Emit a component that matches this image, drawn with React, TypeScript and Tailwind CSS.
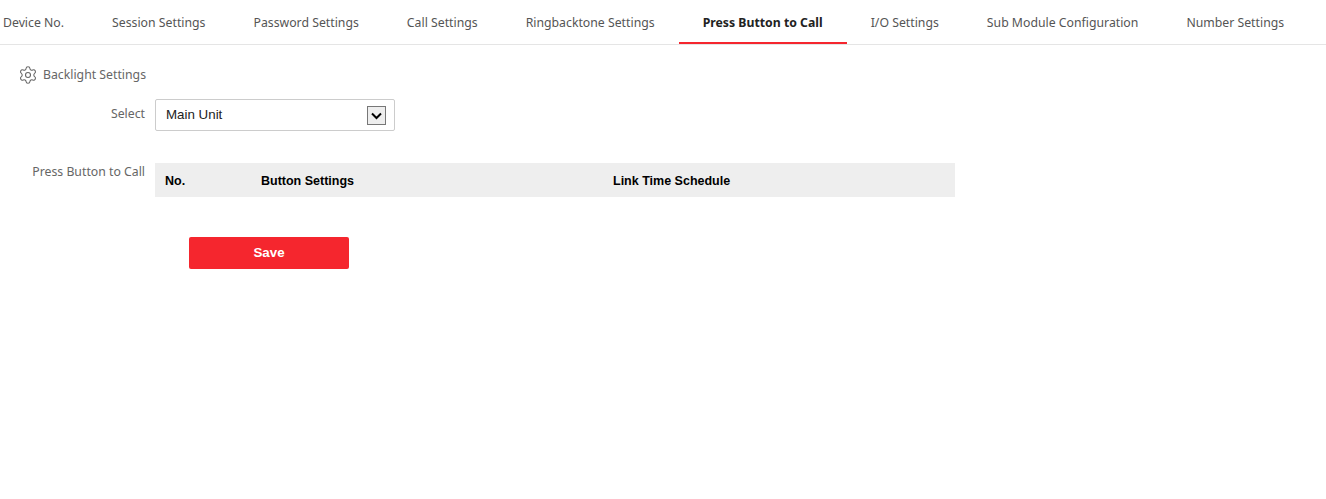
import { Settings } from "lucide-react";

const tabs = [
  "Device No.",
  "Session Settings",
  "Password Settings",
  "Call Settings",
  "Ringbacktone Settings",
  "Press Button to Call",
  "I/O Settings",
  "Sub Module Configuration",
  "Number Settings",
];

export default function App() {
  return (
    <div className="w-[1326px] h-[499px] overflow-hidden bg-white font-['Liberation_Sans',sans-serif]">
      <div className="h-[45px] border-b border-[#e5e5e5] flex pl-[3px] gap-[48px] text-[12.27px] text-[#555] font-['Noto_Sans',sans-serif]">
        {tabs.map((t) => (
          <div key={t} className="relative h-[44px] leading-[45px] whitespace-nowrap">
            {t === "Press Button to Call" ? (
              <>
                <span className="font-bold text-[#222]">{t}</span>
                <div className="absolute -left-6 -right-6 bottom-0 h-[2px] bg-[#f5262e]" />
              </>
            ) : (
              t
            )}
          </div>
        ))}
      </div>

      <div className="flex items-center gap-[5px] pl-[18px] pt-[20px] h-[40px] text-[12.27px] text-[#666] font-['Noto_Sans',sans-serif]">
        <Settings size={20} strokeWidth={1.3} className="text-[#666]" />
        <span>Backlight Settings</span>
      </div>

      <div className="flex items-start mt-[14px]">
        <div className="w-[145px] text-right text-[12.27px] text-[#666] leading-[30px] font-['Noto_Sans',sans-serif]">Select</div>
        <div className="ml-[10px] w-[240px] h-[32px] border border-[#ccc] rounded-[2px] flex items-center justify-between pl-[10px] pr-[8px] text-[13.33px] text-[#222]">
          <span>Main Unit</span>
          <div className="w-[19px] h-[19px] border border-[#777] bg-[#eee] flex items-center justify-center">
            <svg width="13" height="13" viewBox="0 0 13 13" fill="none">
              <path d="M2 4.5 L6.5 9 L11 4.5" stroke="#000" strokeWidth="2" />
            </svg>
          </div>
        </div>
      </div>

      <div className="flex items-start mt-[32px]">
        <div className="w-[145px] text-right text-[12.27px] text-[#666] leading-[18px] font-['Noto_Sans',sans-serif]">Press Button to Call</div>
        <div className="ml-[10px] w-[800px] h-[34px] bg-[#eee] flex items-center pl-[10px] pt-[2px] text-[12.5px] font-bold text-black">
          <div className="w-[96px]">No.</div>
          <div className="w-[352px]">Button Settings</div>
          <div>Link Time Schedule</div>
        </div>
      </div>

      <button className="block ml-[189px] mt-[40px] w-[160px] h-[32px] bg-[#f5262e] rounded-[2px] text-white text-[13.33px] font-bold">
        Save
      </button>
    </div>
  );
}
